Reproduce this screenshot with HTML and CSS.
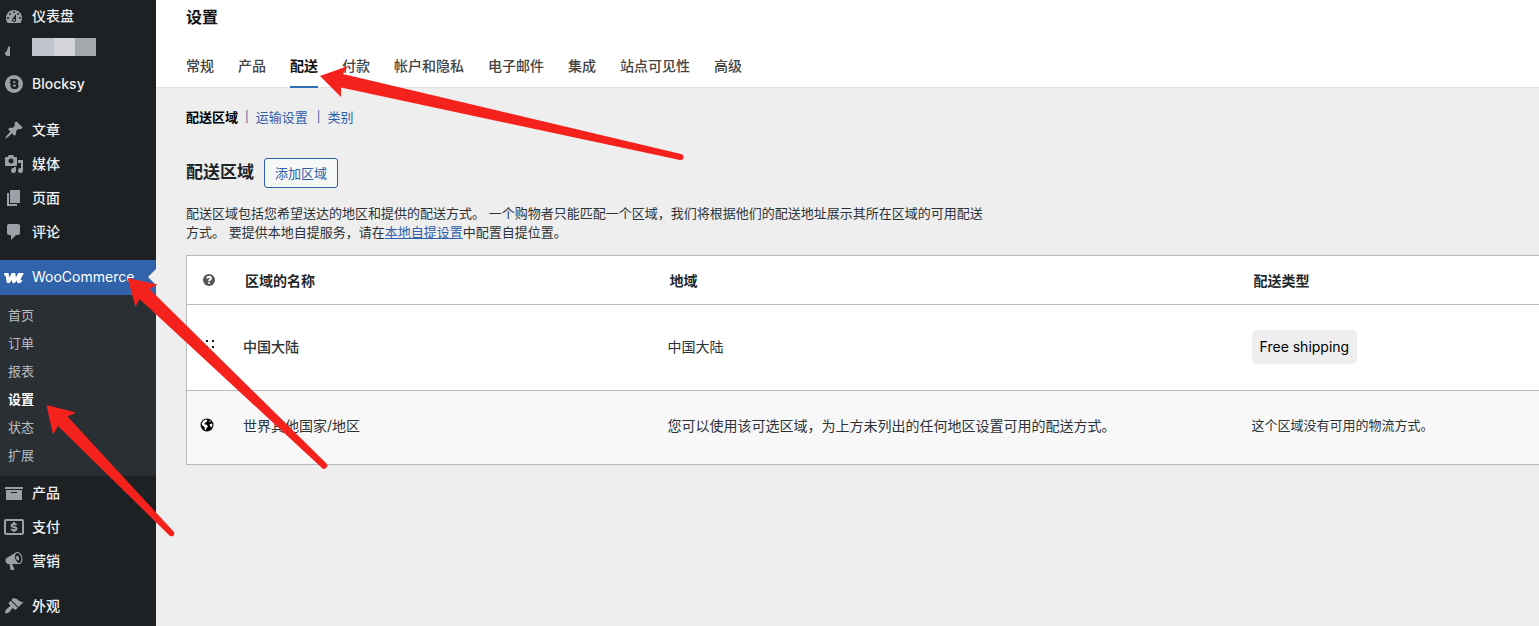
FILE: index.html
```html
<!DOCTYPE html>
<html lang="zh-CN">
<head>
<meta charset="utf-8">
<title>设置</title>
<link rel="stylesheet" href="styles.css">
</head>
<body>
<div class="layout">
  <nav class="menu">
    <a class="item first" href="#"><svg class="icon" viewBox="0 0 20 20"><path fill-rule="evenodd" d="M3.76 17h12.48c1.1-1.37 1.76-3.11 1.76-5 0-4.42-3.58-8-8-8s-8 3.58-8 8c0 1.89.66 3.63 1.76 5zM10 5a1 1 0 1 1 0 2 1 1 0 0 1 0-2zM6 7a1 1 0 1 1 0 2 1 1 0 0 1 0-2zm8 0a1 1 0 1 1 0 2 1 1 0 0 1 0-2zm-5.370 5.550L12 8v6a2 2 0 1 1-3.370-1.450zM4 11a1 1 0 1 1 0 2 1 1 0 0 1 0-2zm12 0a1 1 0 1 1 0 2 1 1 0 0 1 0-2zm-5 3a1 1 0 1 0-2 0 1 1 0 0 0 2 0z"/></svg><span>仪表盘</span></a>
    <div class="item masked">
      <svg class="icon" viewBox="0 0 20 20"><path d="M6 8v10H4C.500 18 0 14 3 13 3.300 10.500 4 9 6 8z"/></svg>
      <span class="mosaic"><i class="m1"></i><i class="m2"></i><i class="m3"></i></span>
    </div>
    <a class="item" href="#"><svg class="icon" viewBox="0 0 20 20"><circle cx="10" cy="10" r="9"/><path class="cut" fill-rule="evenodd" d="M6 5h5.500c3 0 4 3 2.200 4.700C15.500 11.500 14.500 15 11.500 15H8.500L6.500 13V9.500L5 8h1.500zM9 7.300v1.400h2.500V7.300zm0 3.500v1.800h3v-1.800z"/></svg><span>Blocksy</span></a>
    <div class="gap"></div>
    <a class="item" href="#"><svg class="icon" viewBox="0 0 20 20"><path d="M10.44 3.02l1.82-1.82 6.36 6.35-1.83 1.82c-1.05-.68-2.48-.57-3.41.36l-.75.75c-.92.93-1.04 2.35-.35 3.41l-1.83 1.82-2.41-2.41-2.8 2.79c-.42.42-3.38 2.71-3.8 2.29s1.86-3.39 2.28-3.81l2.79-2.79L4.1 9.36l1.83-1.82c1.05.69 2.48.57 3.4-.36l.75-.75c.93-.92 1.05-2.35.36-3.41z"/></svg><span>文章</span></a>
    <a class="item" href="#"><svg class="icon" viewBox="0 0 20 20"><path fill-rule="evenodd" d="M13 11V4c0-.55-.45-1-1-1h-1.670L9 1H5L3.670 3H2c-.55 0-1 .45-1 1v7c0 .55.45 1 1 1h10c.55 0 1-.45 1-1zM7 4.500a2.500 2.500 0 1 1 0 5 2.500 2.500 0 0 1 0-5zM14 6h5v10.500a2.500 2.500 0 1 1-2-2.450V9h-3V6zm-4 8.050V13h2v3.500a2.500 2.500 0 1 1-2-2.450z"/></svg><span>媒体</span></a>
    <a class="item" href="#"><svg class="icon" viewBox="0 0 20 20"><path d="M6 15V2h10v13H6zm-1 1h8v2H3V5h2v11z"/></svg><span>页面</span></a>
    <a class="item" href="#"><svg class="icon" viewBox="0 0 20 20"><path d="M5 2h9c1.100 0 2 .9 2 2v7c0 1.100-.9 2-2 2h-2l-5 5v-5H5c-1.100 0-2-.9-2-2V4c0-1.100.9-2 2-2z"/></svg><span>评论</span></a>
    <div class="gap"></div>
    <a class="item current" href="#" aria-current="true"><svg class="icon" viewBox="0 0 20 20"><path class="woo" d="M.200 5H4.500L5.300 9.500 7.700 5H11.200L11.900 9.500 14.300 5H19.800C18.800 7.500 16.800 10.300 16.600 11.500 16.600 12.500 17.500 12.500 18.600 11.800 18 14 16.600 15.200 14.900 15.200 13.300 15.200 12.500 14 12.800 12.300 11.700 14.400 10.800 15.200 9.500 15.200 8.200 15.200 7.900 13.600 7.800 11.800 6.600 14.100 5.600 15.200 4.300 15.200 2.500 15.200 2.400 12.500 2 9.500 1.800 8 1.300 7.600.200 7.600z"/></svg><span>WooCommerce</span></a>
    <div class="submenu">
      <a href="#">首页</a>
      <a href="#">订单</a>
      <a href="#">报表</a>
      <a class="on" href="#">设置</a>
      <a href="#">状态</a>
      <a href="#">扩展</a>
    </div>
    <a class="item" href="#"><svg class="icon" viewBox="0 0 20 20"><path fill-rule="evenodd" d="M19 4v2H1V4h18zM2 7h16v10H2V7zm11 3V9H7v1h6z"/></svg><span>产品</span></a>
    <a class="item" href="#"><svg class="icon" viewBox="0 0 20 20"><rect class="line" x="1" y="3" width="18" height="14" rx="1"/><path class="line" d="M12.500 8c-.5-1-4.500-1.500-5 .3-.4 2.200 5 1.300 5 3.400 0 1.900-4.500 1.800-5.200.3M10 5v2m0 6v2"/></svg><span>支付</span></a>
    <a class="item" href="#"><svg class="icon" viewBox="0 0 20 20"><path fill-rule="evenodd" d="M18.15 5.94c.46 1.62.38 3.22-.02 4.48-.42 1.28-1.26 2.18-2.3 2.48-.16.06-.26.06-.4.06-.06.02-.12.02-.18.02-.06.02-.14.02-.22.02h-6.8l2.22 5.5c.02.14-.06.26-.14.34-.08.1-.24.16-.34.16H6.95c-.1 0-.26-.06-.34-.16-.08-.08-.16-.2-.14-.34l-1-5.5H4.25l-.02-.02c-.5.06-1.08-.18-1.54-.62s-.88-1.08-1.06-1.88c-.24-.8-.2-1.56-.02-2.2.18-.62.58-1.08 1.06-1.3l.02-.02 9-5.4c.1-.06.18-.1.24-.16.06-.04.14-.08.24-.12.16-.08.28-.12.5-.18 1.04-.3 2.24.1 3.22.98s1.84 2.24 2.26 3.86zm-2.58 5.98h-.02c.4-.1.74-.34 1.04-.7.58-.7.86-1.76.86-3.04 0-.64-.1-1.3-.28-1.98-.34-1.36-1.02-2.5-1.78-3.24s-1.68-1.1-2.46-.88c-.82.22-1.4.96-1.7 2-.32 1.04-.28 2.36.06 3.72.38 1.36 1 2.5 1.8 3.24.78.74 1.62 1.1 2.48.88zm-2.54-7.08c.22-.04.42-.02.62.04.38.16.76.48 1.02 1s.42 1.2.42 1.78c0 .3-.04.56-.12.8-.18.48-.44.84-.86.94-.34.1-.8-.06-1.14-.4s-.64-.86-.78-1.5c-.18-.62-.12-1.24.02-1.72s.48-.84.82-.94z"/></svg><span>营销</span></a>
    <div class="gap"></div>
    <a class="item" href="#"><svg class="icon" viewBox="0 0 20 20"><path d="M14.480 11.060L7.410 3.990l1.500-1.500c.5-.56 2.300-.47 3.510.32 1.210.8 1.430 1.280 2.910 2.100 1.180.64 2.450 1.260 4.450.85zm-.71.71L6.700 4.700 4.930 6.470c-.39.39-.39 1.020 0 1.410l1.060 1.060c.39.39.39 1.030 0 1.420-.6.6-1.430 1.110-2.210 1.690-.35.26-.7.53-1.010.84C1.430 14.230.4 16.080 1.400 17.070c.99 1 2.840-.03 4.180-1.360.31-.31.58-.66.85-1.020.57-.78 1.080-1.610 1.690-2.210.39-.39 1.020-.39 1.410 0l1.060 1.060c.39.39 1.020.39 1.410 0z"/></svg><span>外观</span></a>
  </nav>

  <div class="page">
    <header class="top">
      <h1>设置</h1>
      <nav class="tabs">
        <a href="#">常规</a>
        <a href="#">产品</a>
        <a class="active" href="#">配送</a>
        <a href="#">付款</a>
        <a href="#">帐户和隐私</a>
        <a href="#">电子邮件</a>
        <a href="#">集成</a>
        <a href="#">站点可见性</a>
        <a href="#">高级</a>
      </nav>
    </header>
    <main class="content">
      <div class="sections">
        <a class="active" href="#">配送区域</a><span>|</span><a href="#">运输设置</a><span class="wide">|</span><a href="#">类别</a>
      </div>
      <div class="heading">
        <h2>配送区域</h2>
        <button type="button">添加区域</button>
      </div>
      <p class="intro">配送区域包括您希望送达的地区和提供的配送方式。 一个购物者只能匹配一个区域，我们将根据他们的配送地址展示其所在区域的可用配送方式。 要提供本地自提服务，请在<a href="#">本地自提设置</a>中配置自提位置。</p>
      <table class="zones">
        <thead>
          <tr>
            <th class="c-sort"><svg class="help" viewBox="0 0 12 12"><circle cx="6" cy="6" r="6"/><path d="M4.200 4.600C4.200 2.200 7.900 2.300 7.900 4.500 7.900 5.800 6.100 5.800 6.100 7.200M6.100 8.300v1.500"/></svg></th>
            <th class="c-name">区域的名称</th>
            <th class="c-area">地域</th>
            <th>配送类型</th>
          </tr>
        </thead>
        <tbody>
          <tr class="zone">
            <td class="c-sort"><svg class="grip" viewBox="0 0 14 14"><path d="M6 0h2v2H6zM12 0h2v2h-2zM6 6h2v2H6zM12 6h2v2h-2zM6 12h2v2H6zM12 12h2v2h-2z"/></svg></td>
            <td class="name">中国大陆</td>
            <td>中国大陆</td>
            <td><span class="method">Free shipping</span></td>
          </tr>
          <tr class="rest">
            <td class="c-sort"><svg class="globe" viewBox="0 0 14 14"><circle cx="7" cy="7" r="6.500"/><path d="M1.500 6L3 3.200 5.500 1.500 7.500 2 6.500 4 4.800 5 4.300 6.200 6.800 6.800 8 8.500 6.500 10 5.800 12.300 4.800 11.500 4.500 9 2.500 7.500zM9.200 2.500L11 3.500 9.800 4.300zM9.500 6.200L12 5.500 12.500 7.500 11 9.800 10.200 8z"/></svg></td>
            <td>世界其他国家/地区</td>
            <td>您可以使用该可选区域，为上方未列出的任何地区设置可用的配送方式。</td>
            <td class="small">这个区域没有可用的物流方式。</td>
          </tr>
        </tbody>
      </table>
    </main>
  </div>
</div>
<svg class="arrows" width="700" height="560" viewBox="0 0 700 560" aria-hidden="true">
  <path d="M320 76L348 66 343 74 681 154A3 3 0 0 1 680 160L341 87.500 341 97z"/>
  <path d="M127.500 278L157.500 284.500 149.500 289 326 463A3 3 0 0 1 322 468L139.500 299 135.500 307z"/>
  <path d="M46.500 405L76 412.500 67.500 416.500 174 532A3 3 0 0 1 170 536L58 426 53 434.500z"/>
</svg>
</body>
</html>
```
FILE: styles.css
```css
* { box-sizing: border-box; }

body {
  margin: 0;
  background: #eee;
  color: #2c3338;
  font: 13px/19px Inter, "Noto Sans CJK SC", sans-serif;
  overflow: hidden;
}

a { color: #2e60a9; text-decoration: none; }

.layout { display: flex; min-height: 100vh; }

/* Admin menu */
.menu {
  flex: none;
  width: 156px;
  height: 100vh;
  overflow: hidden;
  background: #1d2124;
}

.item {
  position: relative;
  display: flex;
  align-items: center;
  gap: 8px;
  height: 34px;
  padding-left: 4px;
  color: #f0f0f1;
  font-size: 14px;
  font-weight: 500;
}
.item > span { padding-bottom: 2px; }

.first { height: 32px; }
.gap { height: 12px; }
.gap ~ .gap { height: 11px; }
.icon { width: 20px; height: 20px; fill: #9ca1a7; }
.icon .cut { fill: #1d2124; }
.icon .line { fill: none; stroke: #9ca1a7; stroke-width: 2; }
.icon .woo { fill: #fff; }

.masked { height: 35px; align-items: flex-start; padding-top: 6px; }
.mosaic { display: flex; }
.mosaic i { width: 21px; height: 18px; }
.mosaic .m1 { width: 22px; background: #bfc3cd; }
.mosaic .m2 { background: #d3d4d9; }
.mosaic .m3 { background: #a4a8ab; }

.current { height: 35px; background: #3163aa; color: #fff; font-weight: 400; }
.current::after {
  content: "";
  position: absolute;
  right: 0;
  top: 9px;
  border: 8px solid transparent;
  border-right-color: #eee;
  border-left: 0;
}

.submenu {
  display: flex;
  flex-direction: column;
  padding: 6px 0 7px;
  background: #2a2f33;
}
.submenu a { padding-left: 8px; color: #b9bdc0; line-height: 28px; }
.submenu .on { color: #fff; font-weight: 700; }

/* Page header */
.page { flex: 1; min-width: 0; }
.top {
  padding: 5px 0 0 30px;
  background: #fff;
  border-bottom: 1px solid #e2e2e2;
}
h1 { margin: 0; color: #111; font-size: 16px; line-height: 24px; }
.tabs { display: flex; gap: 24px; padding-top: 15px; }
.tabs a {
  padding: 10px 0 8px;
  color: #444;
  font-size: 14px;
  font-weight: 500;
  line-height: 24px;
}
.tabs .active { margin-bottom: -1px; border-bottom: 2px solid #2f6fb5; color: #111; font-weight: 700; }

/* Content */
.content { padding: 20px 0 0 30px; }
.sections { display: flex; }
.sections span { padding: 0 7px; color: #2e60a9; font-size: 11px; }
.sections .wide { padding-left: 9px; }
.sections .active { color: #000; font-weight: 700; }
.heading { display: flex; align-items: center; gap: 10px; padding-top: 31px; }
h2 { margin: 0; padding-bottom: 2px; color: #1d2327; font-size: 17px; line-height: 28px; }
button {
  height: 30px;
  padding: 0 10px;
  border: 1px solid #2e60a9;
  border-radius: 3px;
  background: #f6f7f7;
  color: #2e60a9;
  font: inherit;
}
.intro { max-width: 800px; margin: 16px 0 13px; }
.intro a { text-decoration: underline; }

.zones {
  width: 100%;
  table-layout: fixed;
  border-collapse: separate;
  border-spacing: 0;
  border: 1px solid #b9bbbe;
  border-right: 0;
  background: #fff;
  font-size: 14px;
}
th, td { padding: 0 20px; text-align: left; }
th { height: 49px; padding-left: 22px; color: #23282d; font-weight: 600; border-bottom: 1px solid #b9bbbe; }
.c-sort { width: 36px; padding: 0 0 0 13px; }
th.c-sort { padding-left: 16px; }
.c-name { width: 31.4%; }
.c-area { width: 43.2%; }
.zone td { height: 86px; border-bottom: 1px solid #b9bbbe; }
.rest td { height: 73px; padding-bottom: 5px; background: #f8f8f8; }
.name { font-weight: 500; }
.zones .small { font-size: 13px; }
.method {
  display: inline-block;
  padding: 0 8px;
  border-radius: 5px;
  background: #eee;
  color: #000;
  line-height: 34px;
  vertical-align: middle;
}
.zone td { padding-bottom: 2px; }
.help { display: block; width: 12px; height: 12px; fill: #555; }
.help path { fill: none; stroke: #fff; stroke-width: 2; }
.grip { display: block; width: 14px; height: 14px; fill: #111; }
.globe { display: block; width: 14px; height: 14px; fill: #000; }
.globe path { fill: #fff; }

/* Annotation arrows drawn over the page */
.arrows { position: absolute; left: 0; top: 0; fill: #f5211d; pointer-events: none; }
```
